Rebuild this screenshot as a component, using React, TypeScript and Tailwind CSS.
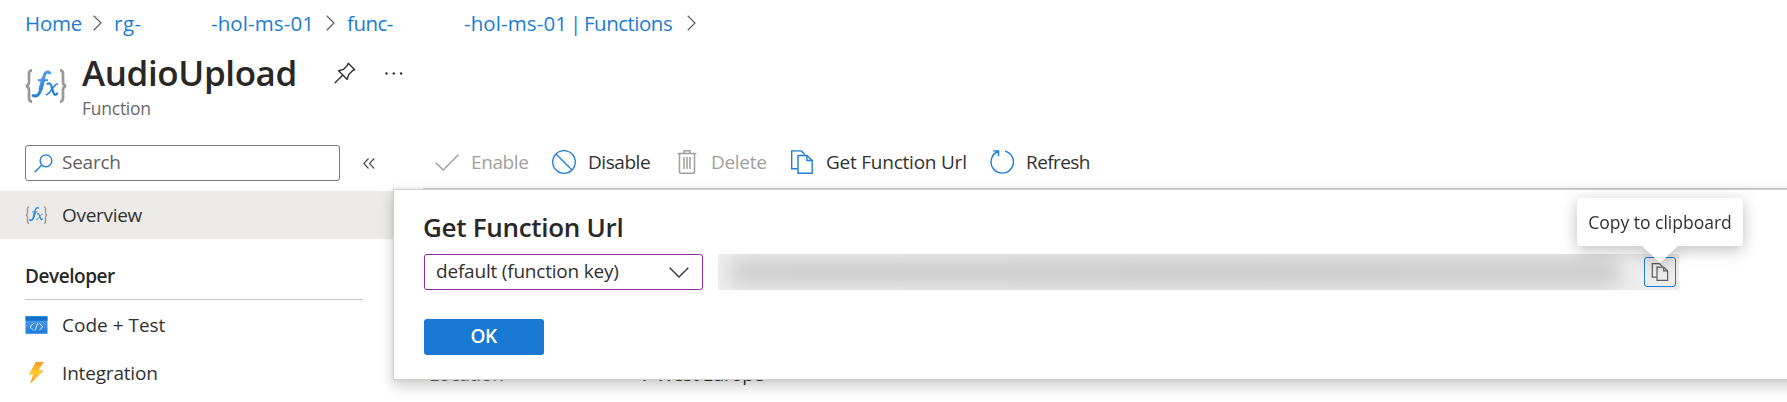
import type { ReactNode } from "react";

function Chevron({ className = "" }: { className?: string }) {
  return (
    <svg className={`h-4 w-[9px] shrink-0 ${className}`} viewBox="0 0 9 16" fill="none" stroke="#605e5c" strokeWidth="1.2">
      <path d="M0.7 0.8 8 8 0.7 15.2" />
    </svg>
  );
}

function FxIcon({ className = "" }: { className?: string }) {
  return (
    <svg className={`shrink-0 ${className}`} viewBox="0 0 42 34">
      <defs>
        <linearGradient id="fx" gradientUnits="userSpaceOnUse" x1="14" y1="0" x2="26" y2="32">
          <stop offset="0" stopColor="#5ea0ef" />
          <stop offset="1" stopColor="#1272cf" />
        </linearGradient>
      </defs>
      <g fill="none" stroke="#999" strokeWidth="2.7">
        <path d="M7 1.4C4.4 1.4 4 2.8 4 4.8V13c0 2.2-.9 3.5-3 4 2.1 .5 3 1.8 3 4v8c0 2.2.4 3.6 3 3.6" />
        <path d="M35 1.4c2.6 0 3 1.4 3 3.4V13c0 2.2.9 3.5 3 4-2.1.5-3 1.8-3 4v8c0 2.2-.4 3.6-3 3.6" />
      </g>
      <g fill="none" stroke="url(#fx)" strokeLinecap="round">
        <path d="M24.800 3.900C22 1.800 19.900 3.700 18.900 7.800L15.800 20.300C14.600 25.300 12 28 8.200 26.600" strokeWidth="3" />
        <path d="M18.500 9 15.600 20.500" strokeWidth="4" strokeLinecap="butt" />
        <path d="M12.900 11.200H23" strokeWidth="2" strokeLinecap="butt" />
        <path d="M22.500 14.900c2-1.200 3.100-.5 3.900 2.300l2 6.300c.7 2.500 1.900 2.900 3.800 1" strokeWidth="2.200" />
        <path d="M32.500 15C29.500 13.800 24.800 26.200 21.300 25.700" strokeWidth="1.600" />
      </g>
    </svg>
  );
}

function PagesIcon({ className = "" }: { className?: string }) {
  return (
    <svg className={`shrink-0 ${className}`} viewBox="0 0 24 24" fill="none" stroke="currentColor">
      <path d="M7.5 18.8H1.7V.9H11.3L14.8 4.5" />
      <path d="M8 5.5H16.9L22.2 10.6V23.2H8Z" />
      <path d="M16.9 5.5V10.5H22.2" />
    </svg>
  );
}

function ToolItem({ icon, className, children }: { icon: ReactNode; className: string; children: ReactNode }) {
  return (
    <div className={`flex h-full shrink-0 items-center gap-3 ${className}`}>
      {icon}
      <span className="pt-px whitespace-nowrap">{children}</span>
    </div>
  );
}

function NavItem({ icon, className, children }: { icon: ReactNode; className: string; children: ReactNode }) {
  return (
    <li className={`flex h-12 items-center pl-[25px] ${className}`}>
      <span className="flex w-[37px] shrink-0">{icon}</span>
      <span>{children}</span>
    </li>
  );
}

export default function App() {
  return (
    <div className="relative flex h-[402px] w-[1787px] flex-col overflow-hidden bg-white font-['Open_Sans',sans-serif] text-[19px] text-[#323130]">
      <nav className="flex h-[46px] shrink-0 items-center pl-[25px] text-[20.5px] text-[#1c7cd6]">
        <a className="w-[68px] tracking-[-0.2px]">Home</a>
        <Chevron />
        <a className="ml-3 w-[97px] tracking-[0.5px]">rg-</a>
        <a className="w-[115px] tracking-[0.1px]">-hol-ms-01</a>
        <Chevron />
        <a className="ml-3 w-[117px] tracking-[-0.5px]">func-</a>
        <a className="flex w-[223px]">
          <span className="w-[106px] tracking-[0.1px]">-hol-ms-01</span>
          <span className="w-[14px]">|</span>
          <span className="tracking-[-0.5px]">Functions</span>
        </a>
        <Chevron />
      </nav>

      <header className="flex h-[99px] shrink-0 pl-[25px]">
        <FxIcon className="mt-[23px] h-[34px] w-[42px]" />
        <div className="ml-[15px]">
          <div className="flex h-[53px] items-center">
            <h1 className="w-[252px] text-[35px] leading-[53px] font-semibold tracking-[-0.4px] text-[#292827]">AudioUpload</h1>
            <svg className="h-[22px] w-[22px]" viewBox="0 0 22 22" fill="none" stroke="#323130" strokeWidth="1.4" strokeLinejoin="round">
              <path d="M14.2 1.2 20.8 7.7 18.8 8.5 14.7 12.6 13.3 17.4 4.6 8.7 9.4 7.4 13.4 3.3Z" />
              <path d="M8.9 13.1.8 21.1" />
            </svg>
            <svg className="mt-0.5 ml-[29px] h-[3px] w-[18px]" viewBox="0 0 18 3" fill="#323130">
              <circle cx="1.5" cy="1.5" r="1.2" />
              <circle cx="8.8" cy="1.5" r="1.2" />
              <circle cx="16.1" cy="1.5" r="1.2" />
            </svg>
          </div>
          <p className="text-[17.5px] leading-[18px] tracking-[-0.25px] text-[#6b6967]">Function</p>
        </div>
      </header>

      <div className="flex min-h-0 flex-1">
        <aside className="w-[393px] shrink-0">
          <div className="flex h-9 items-center pl-[25px]">
            <div className="flex h-9 w-[315px] items-center rounded-[3px] border border-[#7a7876] pl-2 text-[#605e5c]">
              <svg className="h-[19px] w-[19px]" viewBox="0 0 19 19" fill="none" stroke="#1c7cd6" strokeWidth="1.4">
                <circle cx="12" cy="6.8" r="5.9" />
                <path d="M7.8 11 .7 18.2" />
              </svg>
              <span className="ml-[9px] pb-px tracking-[-0.25px]">Search</span>
            </div>
            <svg className="ml-[23px] h-[11px] w-3" viewBox="0 0 12 11" fill="none" stroke="#484644" strokeWidth="1.1">
              <path d="M5.5.5.8 5.5 5.5 10.5M11.2.5 6.5 5.5 11.2 10.5" />
            </svg>
          </div>
          <ul className="mt-[10px]">
            <NavItem className="bg-[#edebe9] tracking-[-0.3px]" icon={<FxIcon className="h-[18px] w-[23px]" />}>
              Overview
            </NavItem>
          </ul>
          <h2 className="ml-[25px] flex h-[61px] w-[338px] items-center border-b border-[#c8c6c4] pt-[14px] font-semibold tracking-[-0.45px] text-[#292827]">
            Developer
          </h2>
          <ul className="mt-[1px]">
            <NavItem
              className=""
              icon={
                <svg className="h-[18px] w-[23px]" viewBox="0 0 23 18">
                  <defs>
                    <linearGradient id="code" x1="0" y1="0" x2="0" y2="1">
                      <stop offset="0" stopColor="#5ea0ef" />
                      <stop offset="1" stopColor="#1b7bd8" />
                    </linearGradient>
                  </defs>
                  <rect x=".5" y=".3" width="22" height="17.4" rx=".6" fill="url(#code)" />
                  <path d="M.5.3h22v4.5H.5z" fill="#1273cd" />
                  <path d="M8.5 7.5 5 10.9 8.5 14.2M14.3 7.5 17.8 10.9 14.3 14.2M12.8 6.9 10 14.6" fill="none" stroke="#fff" strokeWidth="1" opacity=".85" />
                </svg>
              }
            >
              Code + Test
            </NavItem>
            <NavItem
              className="tracking-[-0.18px]"
              icon={
                <svg className="h-[22px] w-[23px]" viewBox="0 0 23 22">
                  <defs>
                    <linearGradient id="bolt" x1="0" y1="0" x2="0" y2="1">
                      <stop offset="0" stopColor="#fa9b2c" />
                      <stop offset=".5" stopColor="#fdcb30" />
                      <stop offset="1" stopColor="#f78d1e" />
                    </linearGradient>
                  </defs>
                  <path d="M10.6 0H19L13.6 8.3H19L5 22 8.2 12.7H3.8Z" fill="url(#bolt)" />
                </svg>
              }
            >
              Integration
            </NavItem>
          </ul>
        </aside>

        <main className="flex-1 pl-[30px]">
          <div className="flex h-11 items-start border-b border-[#d2d0ce] pl-3">
            <div className="flex h-[33px]">
              <ToolItem
                className="w-[117px] tracking-[-0.4px] text-[#a19f9d]"
                icon={
                  <svg className="h-6 w-6" viewBox="0 0 24 24" fill="none" stroke="currentColor" strokeWidth="1.5">
                    <path d="M.7 12.7 8.3 20 23.3 4.8" />
                  </svg>
                }
              >
                Enable
              </ToolItem>
              <ToolItem
                className="w-[123px] tracking-[-0.45px]"
                icon={
                  <svg className="h-6 w-6" viewBox="0 0 24 24" fill="none" stroke="#1c7cd6" strokeWidth="1.3">
                    <circle cx="12" cy="12" r="11.3" />
                    <path d="M4 4 20 20" />
                  </svg>
                }
              >
                Disable
              </ToolItem>
              <ToolItem
                className="w-[114px] tracking-[-0.3px] text-[#a19f9d]"
                icon={
                  <svg className="h-6 w-6" viewBox="0 0 24 24" fill="none" stroke="currentColor" strokeWidth="1.5">
                    <path d="M2.5 3.5H21.5M9 3.2V.8H15V3.2M4.500 3.500V22Q4.500 23.200 5.700 23.200H18.300Q19.500 23.200 19.500 22V3.500M9 7V19M12 7V19M15 7V19" />
                  </svg>
                }
              >
                Delete
              </ToolItem>
              <ToolItem className="w-[201px] tracking-[-0.23px]" icon={<PagesIcon className="ml-px h-6 w-6 stroke-[1.4] text-[#1c7cd6]" />}>
                Get Function Url
              </ToolItem>
              <ToolItem
                className="tracking-[-0.6px]"
                icon={
                  <svg className="h-6 w-6" viewBox="0 0 24 24" fill="none" stroke="#1c7cd6" strokeWidth="1.4">
                    <path d="M15 1.1A11.2 11.2 0 1 1 8.2 1.5M3 .9H8.5V6.3" />
                  </svg>
                }
              >
                Refresh
              </ToolItem>
            </div>
          </div>
          <dl className="mt-[174px] flex items-center pl-[6px] leading-[22px]">
            <dt className="w-[213px] tracking-[-0.1px] text-[#605e5c]">Location</dt>
            <dd className="flex">
              <span className="w-[14px]">:</span>
              <span className="tracking-[-0.45px]">West Europe</span>
            </dd>
          </dl>
        </main>
      </div>

      <section className="absolute top-[189px] left-[393px] h-[191px] w-[1500px] border border-[#d2d0ce] bg-white pt-[22px] pl-[30px] shadow-[0_6px_14px_rgba(0,0,0,0.2),0_0_5px_rgba(0,0,0,0.08)]">
        <h2 className="-ml-px text-[26px] leading-[30px] font-semibold tracking-[-0.3px] text-[#292827]">Get Function Url</h2>
        <div className="mt-3 flex h-9">
          <div className="flex h-9 w-[279px] items-center justify-between rounded-[3px] border border-[#8a2da5] pr-[13px] pl-[11px]">
            <span className="pb-px tracking-[-0.2px]">default (function key)</span>
            <svg className="h-[11px] w-5" viewBox="0 0 20 11" fill="none" stroke="#323130" strokeWidth="1.3">
              <path d="M.7.8 10 10 19.3.8" />
            </svg>
          </div>
          <div className="ml-[15px] flex h-9 w-[961px] items-center justify-end overflow-hidden bg-[#eeeeee] pr-[3px]">
            <div className="ml-3 h-[30px] flex-1 rounded-lg bg-linear-to-r from-[#cfcfcf] via-[#cbcbcb] to-[#cccccc] blur-[10px]" />
            <div className="ml-6 flex h-[30px] w-8 shrink-0 items-center justify-center rounded-[3px] border border-[#1c7cd6]">
              <PagesIcon className="h-[18px] w-[18px] stroke-[1.6] text-[#605e5c]" />
            </div>
          </div>
        </div>
        <button className="mt-[29px] h-9 w-[120px] rounded-[3px] bg-[#1878d2] pr-px pb-px font-semibold tracking-[-0.5px] text-white">OK</button>
      </section>

      <div className="absolute top-[198px] left-[1577px] drop-shadow-[0_4px_8px_rgba(0,0,0,0.25)]">
        <div className="flex h-12 w-[166px] items-center justify-center rounded-[3px] bg-white text-[17.5px] whitespace-nowrap">
          Copy to clipboard
        </div>
        <svg className="ml-[65px] h-[17px] w-9" viewBox="0 0 36 17" fill="#fff">
          <path d="M0 0H36L18 17Z" />
        </svg>
      </div>
    </div>
  );
}
